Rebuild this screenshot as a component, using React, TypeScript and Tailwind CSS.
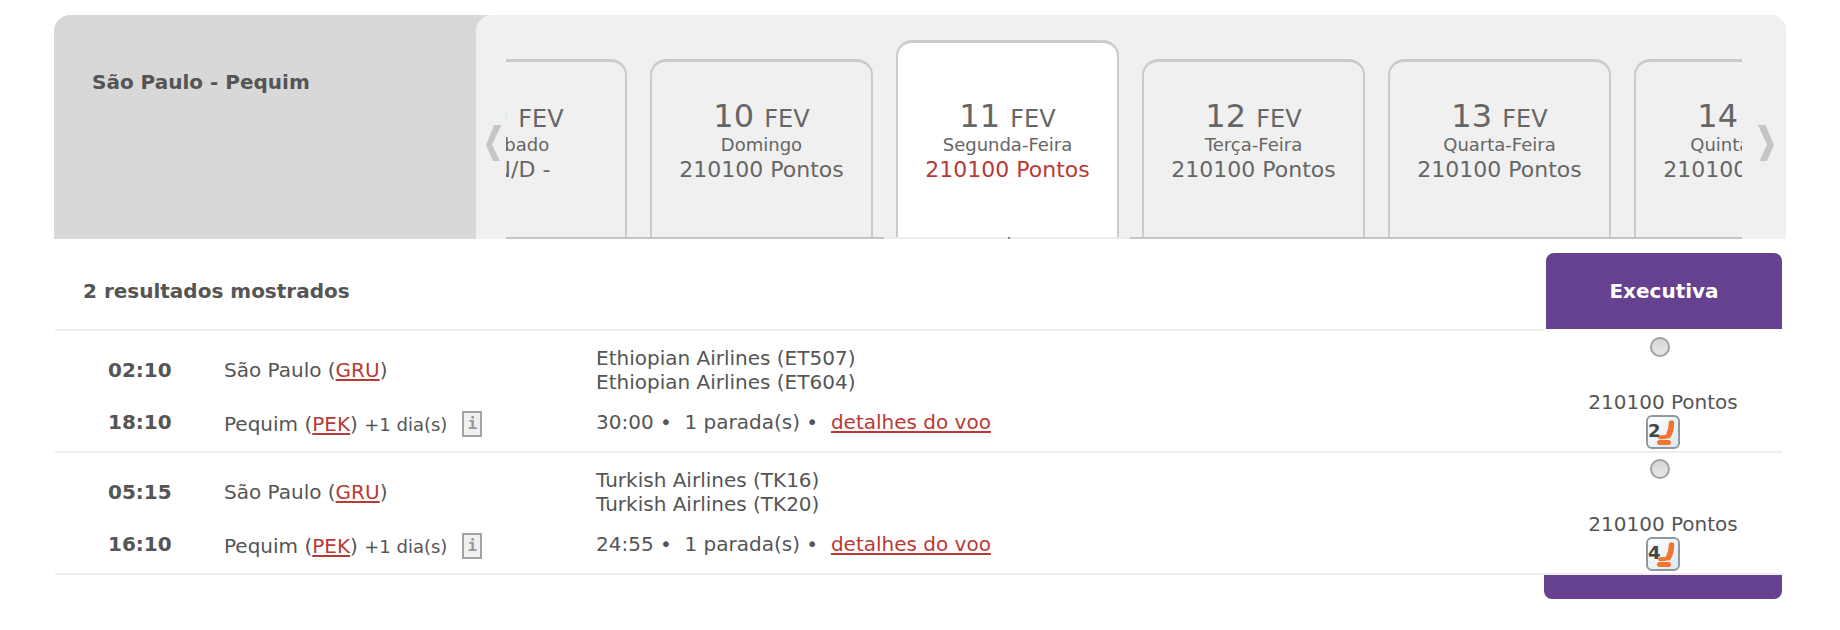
interface DayOption {
  day: string;
  month: string;
  weekday: string;
  price: string;
  selected?: boolean;
}

interface Flight {
  id: string;
  departure: string;
  arrival: string;
  carriers: string[];
  duration: string;
  price: string;
  seats: number;
}

const days: DayOption[] = [
  { day: "09", month: "FEV", weekday: "Sábado", price: "\u00a0\u00a0N/D -" },
  { day: "10", month: "FEV", weekday: "Domingo", price: "210100 Pontos" },
  { day: "11", month: "FEV", weekday: "Segunda-Feira", price: "210100 Pontos", selected: true },
  { day: "12", month: "FEV", weekday: "Terça-Feira", price: "210100 Pontos" },
  { day: "13", month: "FEV", weekday: "Quarta-Feira", price: "210100 Pontos" },
  { day: "14", month: "FEV", weekday: "Quinta-Feira", price: "210100 Pontos" },
];

const flights: Flight[] = [
  {
    id: "et507",
    departure: "02:10",
    arrival: "18:10",
    carriers: ["Ethiopian Airlines (ET507)", "Ethiopian Airlines (ET604)"],
    duration: "30:00",
    price: "210100 Pontos",
    seats: 2,
  },
  {
    id: "tk16",
    departure: "05:15",
    arrival: "16:10",
    carriers: ["Turkish Airlines (TK16)", "Turkish Airlines (TK20)"],
    duration: "24:55",
    price: "210100 Pontos",
    seats: 4,
  },
];

const linkClass = "text-[#b93a34] underline decoration-2 underline-offset-2";

const DayCard = ({ day, month, weekday, price, selected }: DayOption) => (
  <li
    className={`flex w-[246px] shrink-0 border-b-2 pl-3 pr-[11px] ${selected ? "h-[199px] border-[#ececec]" : "h-[180px] border-[#c4c4c4]"}`}
  >
    <button
      className={`relative flex w-full flex-col items-center justify-start rounded-t-2xl border-2 border-b-0 border-t-3 border-[#cbcbcb] text-[#666] ${selected ? "bg-white pt-[57px]" : "pt-[38px]"}`}
    >
      <span className="text-[32px] leading-8">
        {day} <span className="text-2xl leading-none">{month}</span>
      </span>
      <span className="text-lg leading-[26px]">{weekday}</span>
      <span className={`text-[22px] leading-6 ${selected ? "text-[#b93a34]" : ""}`}>{price}</span>
      {selected && <span className="absolute -bottom-0.5 left-1/2 size-0.5 bg-[#888]" />}
    </button>
  </li>
);

const SeatBadge = ({ seats }: { seats: number }) => (
  <span className="relative block size-[34px] rounded-md border-2 border-[#8f989f] bg-linear-to-br from-white to-[#dce8f1]">
    <svg className="absolute inset-0" width="30" height="30" viewBox="0 0 30 30" fill="none" stroke="#f0762f" strokeLinecap="round" strokeLinejoin="round">
      <path d="M23.500 6C23.400 10 22.500 15 20.500 18.500" strokeWidth="5.5" />
      <path d="M12 20.200C15 20.400 18 20.400 20.500 18.500" strokeWidth="4" />
      <path d="M11.500 25.500H20.500" strokeWidth="5" />
    </svg>
    <span className="absolute left-0 top-0.5 text-lg font-bold leading-6 text-[#444]">{seats}</span>
  </span>
);

const InfoButton = () => (
  <button
    aria-label="Informações"
    className="ml-[15px] flex h-[26px] w-5 items-center justify-center border-2 border-[#a3a3a3] bg-[#f0f0f0] font-['DejaVu_Sans_Mono',monospace] text-base font-bold text-[#999]"
  >
    i
  </button>
);

const FlightRow = ({ flight }: { flight: Flight }) => (
  <tr className="align-top">
    <td className="border-b-2 border-[#eee] pl-[53px] pt-[27px] font-bold">
      <div>{flight.departure}</div>
      <div className="mt-7">{flight.arrival}</div>
    </td>
    <td className="border-b-2 border-[#eee] pt-[27px]">
      <div>
        São Paulo (<a href="#gru" className={linkClass}>GRU</a>)
      </div>
      <div className="mt-[29px] flex items-center">
        <span>
          Pequim (<a href="#pek" className={linkClass}>PEK</a>) <span className="text-lg leading-none">+1 dia(s)</span>
        </span>
        <InfoButton />
      </div>
    </td>
    <td className="border-b-2 border-[#eee] pt-[15px]">
      {flight.carriers.map((carrier) => (
        <div key={carrier}>{carrier}</div>
      ))}
      <div className="mt-4">
        {flight.duration} • &nbsp;1 parada(s) • &nbsp;
        <a href={`#${flight.id}`} className={linkClass}>detalhes do voo</a>
      </div>
    </td>
    <td className="border-b-2 border-[#eee] pb-0.5 pt-1.5">
      <label className="flex flex-col items-center">
        <input
          type="radio"
          name="flight"
          value={flight.id}
          className="mr-1.5 size-5 appearance-none rounded-full border-2 border-[#a0a0a0] bg-linear-to-b from-[#d6d6d6] to-[#e6e6e6]"
        />
        <span className="mb-px mt-[33px]">{flight.price}</span>
        <SeatBadge seats={flight.seats} />
      </label>
    </td>
  </tr>
);

const App = () => {
  return (
    <main className="bg-white px-[54px] pt-[15px] font-['DejaVu_Sans',Verdana,sans-serif] text-xl leading-6 text-[#555]">
      <section className="flex h-56 overflow-hidden rounded-t-2xl bg-[#d8d8d8]">
        <h1 className="w-[422px] shrink-0 pl-[38px] pt-[55px] font-bold">São Paulo - Pequim</h1>
        <div className="flex min-w-0 flex-1 rounded-tl-2xl bg-[#f0f0f0]">
          <button aria-label="Dias anteriores" className="flex w-[30px] shrink-0 justify-end pr-1 pt-[110px]">
            <svg width="16" height="36" viewBox="0 0 16 36" fill="#c5c5c5">
              <path d="M8 0H15.500L6 19.500L14 36H7L0 20Z" />
            </svg>
          </button>
          <div className="flex min-w-0 flex-1 items-end overflow-hidden">
            <ul className="-ml-[114px] flex items-end">
              {days.map((option) => (
                <DayCard key={option.day} {...option} />
              ))}
            </ul>
          </div>
          <button aria-label="Próximos dias" className="flex w-11 shrink-0 justify-end pr-3 pt-[110px]">
            <svg width="16" height="36" viewBox="0 0 16 36" fill="#c5c5c5">
              <path d="M0 0H7.500L16 20L9 36H1.500L9 19.500Z" />
            </svg>
          </button>
        </div>
      </section>

      <table className="mt-3.5 w-full table-fixed border-separate border-spacing-0 pl-px pr-1">
        <colgroup>
          <col className="w-[169px]" />
          <col className="w-[372px]" />
          <col />
          <col className="w-[238px]" />
        </colgroup>
        <thead>
          <tr>
            <th colSpan={3} className="border-b-2 border-[#eee] pl-7 text-left">
              2 resultados mostrados
            </th>
            <th className="border-b-2 border-white pl-0.5">
              <div className="rounded-t-lg bg-[#65418f] py-[26px] text-white">Executiva</div>
            </th>
          </tr>
        </thead>
        <tbody>
          {flights.map((flight) => (
            <FlightRow key={flight.id} flight={flight} />
          ))}
        </tbody>
        <tfoot>
          <tr>
            <td colSpan={3} />
            <td className="h-6 rounded-b-lg bg-[#65418f]" />
          </tr>
        </tfoot>
      </table>
    </main>
  );
};

export default App;
